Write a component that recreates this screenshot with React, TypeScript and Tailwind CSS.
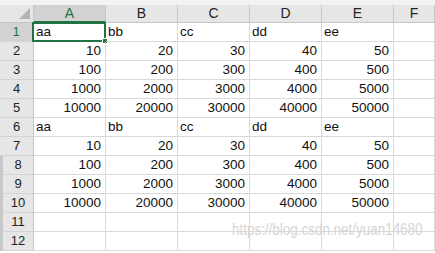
import React from "react";

const cols = ["A", "B", "C", "D", "E", "F"];
type Cell = string | number | null;

const block: Cell[][] = [
  ["aa", "bb", "cc", "dd", "ee", null],
  [10, 20, 30, 40, 50, null],
  [100, 200, 300, 400, 500, null],
  [1000, 2000, 3000, 4000, 5000, null],
  [10000, 20000, 30000, 40000, 50000, null],
];
const rows: Cell[][] = [
  ...block,
  ...block,
  [null, null, null, null, null, null],
  [null, null, null, null, null, null],
];

const font = { fontFamily: '"Liberation Sans", Arial, sans-serif' };

export default function App() {
  return (
    <div className="relative w-[435px] h-[253px] overflow-hidden bg-white" style={font}>
      <div className="h-[5px] bg-[#f3f3f3]" />
      <div className="grid grid-cols-[34px_72px_72px_72px_72px_72px_1fr] grid-rows-[18px] auto-rows-[19px]">
        <div className="relative bg-[#e6e6e6] border-r border-b border-[#c6c6c6]">
          <svg className="absolute right-[3px] bottom-[3px]" width="11" height="11" viewBox="0 0 11 11">
            <polygon points="11,0 11,11 0,11" fill="#b4b4b4" />
          </svg>
        </div>
        {cols.map((c, i) => (
          <div
            key={c}
            className={
              i === 0
                ? "flex items-center justify-center bg-[#d2d2d2] text-[#217346] text-[14px] border-r border-[#c6c6c6] border-b-2 border-b-[#217346]"
                : "flex items-center justify-center bg-[#e6e6e6] text-[#222] text-[14px] border-r border-b border-[#c6c6c6]"
            }
          >
            {c}
          </div>
        ))}
        {rows.map((r, ri) => (
          <React.Fragment key={ri}>
            <div
              className={
                (ri === 0
                  ? "bg-[#d2d2d2] text-[#217346] border-r-2 border-r-[#217346] "
                  : "bg-[#e6e6e6] text-[#222] border-r border-r-[#c6c6c6] ") +
                (ri >= 7 ? "border-l-[3px] border-l-[#c8c8c8] " : "") +
                "flex items-center justify-center text-[13px] border-b border-b-[#d4d4d4]"
              }
            >
              {ri + 1}
            </div>
            {r.map((v, ci) => (
              <div
                key={ci}
                className={
                  "relative flex items-end pb-[1px] text-[13.5px] leading-[16px] text-[#111] border-r border-b border-[#d9d9d9] " +
                  (typeof v === "number" ? "justify-end pr-[4px]" : "justify-start pl-[2px]")
                }
              >
                {v}
                {ri === 0 && ci === 0 && (
                  <div className="absolute -left-[2px] -top-[1px] -right-[1px] -bottom-[1px] border-2 border-[#217346]">
                    <div className="absolute -right-[4px] -bottom-[4px] w-[6px] h-[6px] bg-[#217346] border border-white" />
                  </div>
                )}
              </div>
            ))}
          </React.Fragment>
        ))}
      </div>
      <div className="absolute left-[232px] top-[221px] text-[16px] leading-[18px] whitespace-nowrap text-[#d6d6d6] origin-left scale-x-[0.84] pointer-events-none">
        https://blog.csdn.net/yuan14680
      </div>
    </div>
  );
}
